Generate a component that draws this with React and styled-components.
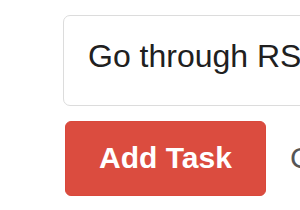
import React, { useState } from 'react';
import styled, { createGlobalStyle } from 'styled-components';

const GlobalStyle = createGlobalStyle`
  html, body {
    margin: 0;
    padding: 0;
    background: #fff;
    overflow: hidden;
  }
  body {
    font-family: "Liberation Sans", Arial, sans-serif;
  }
`;

const Editor = styled.div`
  padding: 15px 0 0 63px;
  display: flex;
  flex-direction: column;
  align-items: flex-start;
  gap: 15px;
`;

const TaskInput = styled.input`
  box-sizing: border-box;
  width: 640px;
  height: 91px;
  padding: 0 24px 8px 24px;
  border: 1px solid #dcdcdc;
  border-radius: 7px;
  font-family: inherit;
  font-size: 32px;
  color: #202020;
  outline: none;
  background: #fff;
`;

const Actions = styled.div`
  display: flex;
  align-items: center;
  gap: 24px;
`;

const Button = styled.button`
  flex-shrink: 0;
  box-sizing: border-box;
  height: 75px;
  font-family: inherit;
  font-size: 30px;
  border-radius: 6px;
  cursor: pointer;
  white-space: nowrap;
  padding: 0 0 2px;
  margin-left: ${(p) => (p.$primary ? '2px' : '0')};
  border: ${(p) => (p.$primary ? '1px solid #d9483b' : 'none')};
  background: ${(p) => (p.$primary ? '#db4c3f' : 'transparent')};
  color: ${(p) => (p.$primary ? '#fff' : '#555')};
  font-weight: ${(p) => (p.$primary ? 700 : 400)};
  width: ${(p) => (p.$primary ? '201px' : 'auto')};
`;

const App = () => {
  const [text, setText] = useState('Go through RSS feeds');

  return (
    <>
      <GlobalStyle />
      <Editor>
        <TaskInput value={text} onChange={(e) => setText(e.target.value)} />
        <Actions>
          <Button $primary>Add Task</Button>
          <Button>Cancel</Button>
        </Actions>
      </Editor>
    </>
  );
};

export default App;
